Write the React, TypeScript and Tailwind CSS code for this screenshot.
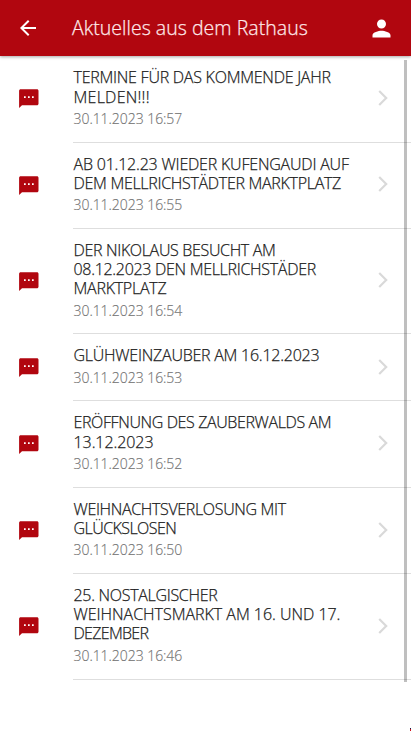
import { MdArrowBack, MdPerson } from 'react-icons/md';

type NewsItem = {
  lines: { text: string; tracking: string }[];
  date: string;
};

const NEWS: NewsItem[] = [
  {
    lines: [
      { text: 'TERMINE FÜR DAS KOMMENDE JAHR', tracking: 'tracking-[-0.25px]' },
      { text: 'MELDEN!!!', tracking: 'tracking-[0.25px]' },
    ],
    date: '30.11.2023 16:57',
  },
  {
    lines: [
      { text: 'AB 01.12.23 WIEDER KUFENGAUDI AUF', tracking: 'tracking-[-0.2px]' },
      { text: 'DEM MELLRICHSTÄDTER MARKTPLATZ', tracking: 'tracking-[-0.3px]' },
    ],
    date: '30.11.2023 16:55',
  },
  {
    lines: [
      { text: 'DER NIKOLAUS BESUCHT AM', tracking: 'tracking-[-0.33px]' },
      { text: '08.12.2023 DEN MELLRICHSTÄDER', tracking: 'tracking-[-0.3px]' },
      { text: 'MARKTPLATZ', tracking: 'tracking-[-0.25px]' },
    ],
    date: '30.11.2023 16:54',
  },
  {
    lines: [{ text: 'GLÜHWEINZAUBER AM 16.12.2023', tracking: 'tracking-[-0.24px]' }],
    date: '30.11.2023 16:53',
  },
  {
    lines: [
      { text: 'ERÖFFNUNG DES ZAUBERWALDS AM', tracking: 'tracking-[-0.38px]' },
      { text: '13.12.2023', tracking: 'tracking-[-0.07px]' },
    ],
    date: '30.11.2023 16:52',
  },
  {
    lines: [
      { text: 'WEIHNACHTSVERLOSUNG MIT', tracking: 'tracking-[-0.34px]' },
      { text: 'GLÜCKSLOSEN', tracking: 'tracking-[-0.55px]' },
    ],
    date: '30.11.2023 16:50',
  },
  {
    lines: [
      { text: '25. NOSTALGISCHER', tracking: 'tracking-[-0.3px]' },
      { text: 'WEIHNACHTSMARKT AM 16. UND 17.', tracking: 'tracking-[-0.02px]' },
      { text: 'DEZEMBER', tracking: 'tracking-[-0.7px]' },
    ],
    date: '30.11.2023 16:46',
  },
];

function MessageIcon() {
  return (
    <svg width="20" height="20" viewBox="0 0 20 20" className="shrink-0 text-[#b1060f]">
      <path
        d="M1.6 0.3H18C18.8 0.3 19.5 1 19.5 1.8V14.7C19.5 15.5 18.8 16.2 18 16.2H3L0.1 19V1.8C0.1 1 0.8 0.3 1.6 0.3Z"
        fill="currentColor"
      />
      <path d="M5 7.3H6.7V9H5ZM9 7.3H10.7V9H9ZM13 7.3H14.7V9H13Z" fill="#fff" />
    </svg>
  );
}

function ChevronIcon() {
  return (
    <svg width="10" height="16" viewBox="0 0 10 16" fill="none" className="shrink-0 text-[#d9d9d9]">
      <path d="M1.2 1L8.2 8L1.2 15" stroke="currentColor" strokeWidth="2.2" />
    </svg>
  );
}

function Header() {
  return (
    <header className="relative z-10 flex h-14 items-center bg-[#b1060f] pr-[17px] pb-px pl-4 text-white shadow-[0_1px_3px_rgba(0,0,0,0.35)]">
      <MdArrowBack size={24} className="mt-px shrink-0" />
      <h1 className="ml-8 grow text-[19.5px] leading-6 font-light tracking-[0.03px] whitespace-nowrap text-[#ffe9ea] [-webkit-text-stroke:0.25px]">
        Aktuelles aus dem Rathaus
      </h1>
      <MdPerson size={27} className="-mr-[1px] mt-px shrink-0" />
    </header>
  );
}

function NewsRow({ item }: { item: NewsItem }) {
  return (
    <li className="flex">
      <div className="flex w-[73px] shrink-0 items-center pl-[19px]">
        <MessageIcon />
      </div>
      <div className="flex grow items-center justify-between border-b border-[#dedede] pt-[12px] pr-[23px] pb-[13.5px]">
        <div className="pl-[0.5px]">
          <h2 className="text-base leading-[19.2px] font-light text-[#1c1c1c] [-webkit-text-stroke:0.25px]">
            {item.lines.map((line) => (
              <span key={line.text} className={`block whitespace-nowrap ${line.tracking}`}>
                {line.text}
              </span>
            ))}
          </h2>
          <p className="mt-[2.2px] text-sm leading-[19.2px] font-light tracking-[-0.05px] text-[#747474] [-webkit-text-stroke:0.15px]">
            {item.date}
          </p>
        </div>
        <ChevronIcon />
      </div>
    </li>
  );
}

export default function App() {
  return (
    <div className="relative h-[731px] w-[411px] overflow-hidden bg-white font-['Open_Sans','Noto_Sans',sans-serif]">
      <Header />
      <ul className="pt-[0.3px]">
        {NEWS.map((item) => (
          <NewsRow key={item.date} item={item} />
        ))}
      </ul>
      {/* Scroll indicator over the list */}
      <div className="absolute top-[60px] right-1 h-[622px] w-[3px] bg-black/25" />
      <div className="absolute right-0 bottom-0 h-[3px] w-px border-t border-[#10204a] bg-[#d0101a]" />
    </div>
  );
}
